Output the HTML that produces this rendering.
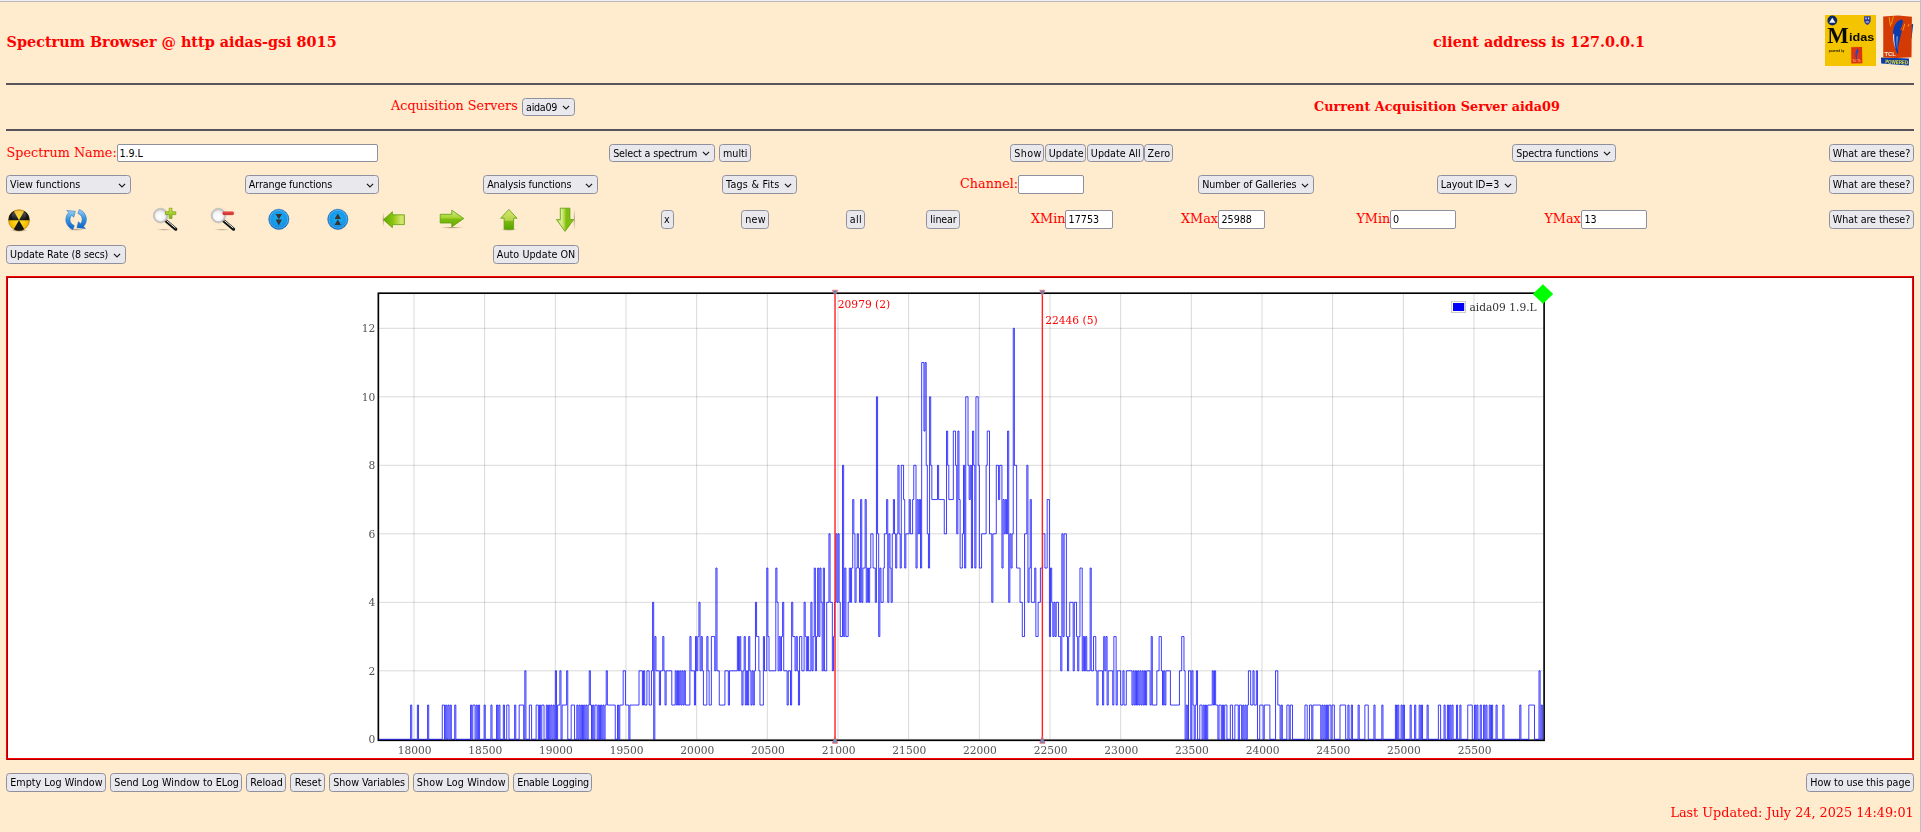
<!DOCTYPE html>
<html lang="en"><head><meta charset="utf-8"><title>Spectrum Browser</title>
<style>
html,body{margin:0;padding:0;}
body{width:1921px;height:832px;overflow:hidden;background:#ffebcd;color:#ff0000;font-family:"DejaVu Serif","Liberation Serif",serif;font-size:12.8px;position:relative;}
.a{position:absolute;white-space:nowrap;line-height:1;}
.t{font-size:12.8px;}
.b{font-weight:bold;}
.h{font-size:14.4px;font-weight:bold;}
.btn,.sel,.inp{position:absolute;box-sizing:border-box;font-family:"DejaVu Sans Condensed","DejaVu Sans","Liberation Sans",sans-serif;font-stretch:condensed;font-size:10.667px;color:#000;white-space:nowrap;overflow:hidden;}
.btn,.sel{background:#e9e9ed;border:1px solid #8f8f9d;border-radius:3.5px;}
.inp{background:#fff;border:1px solid #8f8f9d;border-radius:2px;}
.btn span,.sel span,.inp span{position:absolute;top:0;}
.hr{position:absolute;left:6px;width:1908px;height:2px;background:#55555a;}
.chev{position:absolute;right:3.7px;top:50%;margin-top:-2px;width:8px;height:5px;}
</style></head>
<body>
<div style="position:absolute;left:0;top:0;width:1921px;height:1px;background:#efefef"></div>
<div style="position:absolute;left:0;top:1px;width:1921px;height:1px;background:#b9b9b9"></div>
<div style="position:absolute;left:1920px;top:0;width:1px;height:832px;background:#c0c0c6"></div>
<div class="a h" style="left:6.6px;top:35px;">Spectrum Browser @ http aidas-gsi 8015</div>
<div class="a h" style="left:1433px;top:35px;">client address is 127.0.0.1</div>
<div class="hr" style="top:83px"></div>
<div class="a t" style="left:391px;top:100px;">Acquisition Servers</div>
<div class="a t b" style="left:1314px;top:101px;">Current Acquisition Server aida09</div>
<div class="hr" style="top:129px"></div>
<div class="a t" style="left:6.5px;top:147px;">Spectrum Name:</div>
<div class="a t" style="left:960px;top:178px;">Channel:</div>
<div class="a t" style="left:1031px;top:213px;">XMin</div>
<div class="a t" style="left:1181px;top:213px;">XMax</div>
<div class="a t" style="left:1356.4px;top:213px;">YMin</div>
<div class="a t" style="left:1544.4px;top:213px;">YMax</div>
<div style="position:absolute;left:6px;top:276px;width:1908px;height:484px;box-sizing:border-box;border:1px solid;border-color:#ff0000 #a80000 #a80000 #ff0000;background:#fff"></div>
<div style="position:absolute;left:7px;top:277px;width:1906px;height:482px;box-sizing:border-box;border:1px solid;border-color:#a80000 #ff0000 #ff0000 #a80000;background:#fff"></div>
<svg width="1921" height="832" viewBox="0 0 1921 832" style="position:absolute;left:0;top:0;overflow:visible;will-change:transform">
<path d="M414.01 294.05V739.30M484.67 294.05V739.30M555.34 294.05V739.30M626.00 294.05V739.30M696.67 294.05V739.30M767.33 294.05V739.30M838.00 294.05V739.30M908.66 294.05V739.30M979.33 294.05V739.30M1049.99 294.05V739.30M1120.66 294.05V739.30M1191.32 294.05V739.30M1261.99 294.05V739.30M1332.65 294.05V739.30M1403.32 294.05V739.30M1473.98 294.05V739.30M379.10 739.30H1542.95M379.10 670.80H1542.95M379.10 602.30H1542.95M379.10 533.80H1542.95M379.10 465.30H1542.95M379.10 396.80H1542.95M379.10 328.30H1542.95" fill="none" stroke="#000" stroke-opacity="0.15" stroke-width="1"/>
<g font-family="'DejaVu Serif','Liberation Serif',serif" font-size="10.67" fill="#545454">
<text x="414.6" y="754" text-anchor="middle">18000</text>
<text x="485.3" y="754" text-anchor="middle">18500</text>
<text x="555.9" y="754" text-anchor="middle">19000</text>
<text x="626.6" y="754" text-anchor="middle">19500</text>
<text x="697.3" y="754" text-anchor="middle">20000</text>
<text x="767.9" y="754" text-anchor="middle">20500</text>
<text x="838.6" y="754" text-anchor="middle">21000</text>
<text x="909.3" y="754" text-anchor="middle">21500</text>
<text x="979.9" y="754" text-anchor="middle">22000</text>
<text x="1050.6" y="754" text-anchor="middle">22500</text>
<text x="1121.3" y="754" text-anchor="middle">23000</text>
<text x="1191.9" y="754" text-anchor="middle">23500</text>
<text x="1262.6" y="754" text-anchor="middle">24000</text>
<text x="1333.3" y="754" text-anchor="middle">24500</text>
<text x="1403.9" y="754" text-anchor="middle">25000</text>
<text x="1474.6" y="754" text-anchor="middle">25500</text>
<text x="375.2" y="743.4" text-anchor="end">0</text>
<text x="375.2" y="674.9" text-anchor="end">2</text>
<text x="375.2" y="606.4" text-anchor="end">4</text>
<text x="375.2" y="537.9" text-anchor="end">6</text>
<text x="375.2" y="469.4" text-anchor="end">8</text>
<text x="375.2" y="400.9" text-anchor="end">10</text>
<text x="375.2" y="332.4" text-anchor="end">12</text>
</g>
<rect x="378.35" y="293.20" width="1165.75" height="447.10" fill="none" stroke="#000" stroke-width="1.65"/>
<path d="M379.10 739.30H380.09H410.62V705.05H411.75V739.30H417.40V705.05H418.53V739.30H427.58V705.05H428.71V739.30H442.27V705.05H444.54V739.30H445.67V705.05H446.80V739.30H447.93V705.05H449.06V739.30H450.19V705.05H451.32V739.30H454.71V705.05H455.84V739.30H470.54V705.05H471.67V739.30H472.80V705.05H475.06V739.30H476.19V705.05H477.32V739.30H478.45V705.05H479.59V739.30H484.11V705.05H485.24V739.30H490.89V705.05H492.02V739.30H496.55V705.05H497.68V739.30H498.81V705.05H499.94V739.30H503.33V705.05H504.46V739.30H506.72V705.05H508.98V739.30H514.64V705.05H515.77V739.30H519.16V705.05H523.68V739.30H524.81V670.80H525.94V739.30H529.33V705.05H531.60V739.30H536.12V705.05H538.38V739.30H539.51V705.05H540.64V739.30H541.77V705.05H544.03V739.30H546.29V705.05H547.42V739.30H548.55V705.05H549.69V739.30H550.82V705.05H551.95V739.30H553.08V705.05H554.21V739.30H555.34V670.80H556.47V739.30H557.60V705.05H559.86V670.80H560.99V739.30H562.12V705.05H566.64V670.80H567.78V739.30H571.17V705.05H574.56V739.30H576.82V705.05H577.95V739.30H579.08V705.05H580.21V739.30H581.34V705.05H582.47V739.30H583.60V705.05H584.74V739.30H585.87V705.05H587.00V739.30H588.13V705.05H589.26V670.80H590.39V705.05H591.52V739.30H592.65V705.05H593.78V739.30H594.91V705.05H597.17V739.30H598.30V705.05H599.43V739.30H600.56V705.05H601.69V739.30H602.83V705.05H603.96V739.30H605.09V705.05H606.22V670.80H607.35V705.05H615.26V739.30H617.52V705.05H618.65V739.30H619.78V705.05H623.18V670.80H625.44V705.05H628.83V739.30H629.96V705.05H639.01V670.80H642.40V705.05H643.53V670.80H644.66V705.05H646.92V670.80H649.18V705.05H651.44V670.80H652.57V602.30H653.70V739.30H654.83V636.55H655.97V670.80H659.36V705.05H660.49V670.80H662.75V636.55H663.88V670.80H665.01V705.05H666.14V670.80H671.79V705.05H675.19V670.80H676.32V705.05H677.45V670.80H678.58V705.05H679.71V670.80H680.84V705.05H681.97V670.80H683.10V705.05H684.23V670.80H685.36V705.05H689.88V636.55H691.02V670.80H694.41V705.05H695.54V636.55H696.67V670.80H697.80V636.55H698.93V602.30H700.06V670.80H701.19V636.55H702.32V670.80H703.45V705.05H706.84V636.55H707.97V670.80H709.11V705.05H711.37V636.55H714.76V670.80H715.89V568.05H717.02V670.80H719.28V705.05H724.93V670.80H728.33V705.05H729.46V670.80H737.37V636.55H738.50V670.80H739.63V636.55H740.76V670.80H741.89V705.05H743.02V670.80H744.16V636.55H745.29V705.05H746.42V670.80H747.55V705.05H748.68V636.55H749.81V670.80H750.94V705.05H752.07V670.80H753.20V705.05H754.33V670.80H755.46V602.30H756.59V636.55H758.85V670.80H759.98V705.05H763.38V636.55H764.51V670.80H766.77V568.05H767.90V636.55H769.03V670.80H775.81V568.05H776.94V602.30H778.07V670.80H779.21V636.55H780.34V670.80H781.47V636.55H782.60V602.30H783.73V670.80H787.12V705.05H788.25V670.80H790.51V705.05H791.64V602.30H792.77V636.55H795.03V670.80H796.16V636.55H797.30V670.80H798.43V705.05H799.56V636.55H801.82V670.80H804.08V602.30H805.21V636.55H806.34V670.80H807.47V636.55H808.60V670.80H810.86V602.30H811.99V670.80H813.12V636.55H814.26V568.05H815.39V670.80H816.52V636.55H817.65V568.05H818.78V636.55H819.91V568.05H821.04V602.30H822.17V670.80H823.30V568.05H824.43V670.80H826.69V602.30H828.95V533.80H830.08V602.30H832.35V670.80H833.48V636.55H834.61V602.30H835.74V533.80H836.87V602.30H838.00V533.80H839.13V602.30H840.26V636.55H842.52V465.30H843.65V636.55H844.78V568.05H845.91V636.55H848.17V602.30H849.30V568.05H850.44V602.30H851.57V568.05H852.70V499.55H853.83V533.80H854.96V602.30H856.09V568.05H857.22V533.80H858.35V568.05H859.48V602.30H860.61V499.55H861.74V602.30H862.87V568.05H865.13V499.55H866.26V602.30H867.40V568.05H868.53V602.30H869.66V568.05H870.79V533.80H873.05V568.05H875.31V602.30H876.44V396.80H877.57V533.80H878.70V636.55H879.83V568.05H880.96V602.30H883.22V568.05H884.35V533.80H886.62V499.55H887.75V602.30H888.88V533.80H890.01V568.05H891.14V602.30H892.27V533.80H893.40V499.55H894.53V533.80H895.66V568.05H896.79V533.80H897.92V465.30H899.05V533.80H900.18V568.05H901.31V465.30H903.58V499.55H904.71V568.05H905.84V533.80H909.23V499.55H910.36V533.80H912.62V499.55H913.75V465.30H916.01V568.05H917.14V499.55H918.27V533.80H919.40V499.55H920.54V568.05H921.67V362.55H923.93V431.05H925.06V362.55H926.19V465.30H927.32V533.80H928.45V568.05H929.58V396.80H930.71V465.30H931.84V499.55H937.49V465.30H938.63V499.55H944.28V533.80H946.54V431.05H947.67V465.30H948.80V499.55H953.32V431.05H955.59V465.30H956.72V533.80H957.85V431.05H958.98V499.55H960.11V568.05H962.37V533.80H963.50V465.30H964.63V568.05H965.76V396.80H968.02V465.30H969.15V499.55H970.28V465.30H971.41V568.05H972.54V431.05H973.68V465.30H974.81V568.05H975.94V396.80H978.20V465.30H979.33V568.05H981.59V533.80H986.11V465.30H987.24V431.05H989.50V533.80H991.77V602.30H992.90V533.80H996.29V465.30H998.55V499.55H999.68V465.30H1001.94V568.05H1003.07V499.55H1004.20V533.80H1005.33V499.55H1006.46V533.80H1007.59V431.05H1008.73V602.30H1009.86V533.80H1010.99V568.05H1012.12V533.80H1013.25V328.30H1014.38V465.30H1016.64V568.05H1020.03V602.30H1022.29V636.55H1024.55V533.80H1026.82V465.30H1027.95V602.30H1029.08V568.05H1030.21V499.55H1031.34V602.30H1034.73V568.05H1035.86V636.55H1038.12V602.30H1040.38V568.05H1042.64V533.80H1044.91V568.05H1047.17V499.55H1049.43V636.55H1050.56V568.05H1051.69V602.30H1052.82V636.55H1053.95V602.30H1055.08V636.55H1056.21V602.30H1058.47V636.55H1060.73V670.80H1061.87V533.80H1063.00V636.55H1064.13V533.80H1066.39V636.55H1067.52V670.80H1068.65V636.55H1069.78V602.30H1073.17V670.80H1074.30V602.30H1076.56V636.55H1077.69V670.80H1078.82V636.55H1079.96V568.05H1082.22V670.80H1083.35V636.55H1084.48V670.80H1085.61V636.55H1086.74V670.80H1090.13V568.05H1091.26V670.80H1093.52V636.55H1095.78V670.80H1096.92V705.05H1098.05V670.80H1102.57V705.05H1103.70V636.55H1104.83V670.80H1105.96V636.55H1107.09V705.05H1108.22V670.80H1112.74V705.05H1113.87V636.55H1116.14V705.05H1117.27V670.80H1120.66V705.05H1122.92V670.80H1124.05V705.05H1126.31V670.80H1131.96V705.05H1133.10V670.80H1134.23V705.05H1135.36V670.80H1136.49V705.05H1137.62V670.80H1138.75V705.05H1139.88V670.80H1141.01V705.05H1142.14V670.80H1143.27V705.05H1144.40V670.80H1145.53V705.05H1146.66V670.80H1150.06V705.05H1151.19V636.55H1152.32V705.05H1156.84V670.80H1159.10V636.55H1161.36V670.80H1162.49V705.05H1163.62V670.80H1164.75V705.05H1165.88V670.80H1170.41V705.05H1179.45V670.80H1181.71V636.55H1183.97V670.80H1185.10V739.30H1186.24V705.05H1187.37V739.30H1188.50V670.80H1190.76V739.30H1191.89V670.80H1193.02V705.05H1194.15V739.30H1195.28V705.05H1196.41V670.80H1197.54V739.30H1199.80V705.05H1202.06V739.30H1203.20V705.05H1204.33V739.30H1205.46V705.05H1206.59V739.30H1207.72V705.05H1212.24V670.80H1213.37V705.05H1214.50V670.80H1215.63V705.05H1217.89V739.30H1219.02V705.05H1221.29V739.30H1222.42V705.05H1223.55V739.30H1224.68V705.05H1226.94V739.30H1230.33V705.05H1232.59V739.30H1234.85V705.05H1238.25V739.30H1239.38V705.05H1241.64V739.30H1242.77V705.05H1243.90V739.30H1245.03V705.05H1246.16V739.30H1247.29V705.05H1248.42V670.80H1250.68V705.05H1252.94V670.80H1254.07V705.05H1256.34V670.80H1257.47V739.30H1259.73V705.05H1263.12V739.30H1264.25V705.05H1269.90V739.30H1275.56V670.80H1277.82V705.05H1280.08V739.30H1281.21V705.05H1282.34V739.30H1286.86V705.05H1289.12V739.30H1290.25V705.05H1292.52V739.30H1304.95V705.05H1307.21V739.30H1309.48V705.05H1311.74V739.30H1312.87V705.05H1320.78V739.30H1321.91V705.05H1323.04V739.30H1324.17V705.05H1325.30V739.30H1326.43V705.05H1327.57V739.30H1328.70V705.05H1330.96V739.30H1332.09V705.05H1334.35V739.30H1340.00V705.05H1345.66V739.30H1347.92V705.05H1349.05V739.30H1351.31V705.05H1352.44V739.30H1358.09V705.05H1359.22V739.30H1364.88V705.05H1368.27V739.30H1373.92V705.05H1375.05V739.30H1381.84V705.05H1382.97V739.30H1395.40V705.05H1396.53V739.30H1397.67V705.05H1398.80V739.30H1401.06V705.05H1402.19V739.30H1403.32V705.05H1404.45V739.30H1410.10V705.05H1411.23V739.30H1414.62V705.05H1415.76V739.30H1419.15V705.05H1420.28V739.30H1421.41V705.05H1422.54V739.30H1427.06V705.05H1428.19V739.30H1438.37V705.05H1440.63V739.30H1444.02V705.05H1445.15V739.30H1447.41V705.05H1448.54V739.30H1449.67V705.05H1450.81V739.30H1451.94V705.05H1453.07V739.30H1456.46V705.05H1457.59V739.30H1459.85V705.05H1460.98V739.30H1467.76V705.05H1472.29V739.30H1474.55V705.05H1475.68V739.30H1476.81V705.05H1477.94V739.30H1480.20V705.05H1481.33V739.30H1483.59V705.05H1484.72V739.30H1485.86V705.05H1486.99V739.30H1489.25V705.05H1490.38V739.30H1491.51V705.05H1492.64V739.30H1496.03V705.05H1497.16V739.30H1502.81V705.05H1503.95V739.30H1519.77V705.05H1520.91V739.30H1528.82V705.05H1534.47V739.30H1539.00V670.80H1540.13V739.30H1541.26V705.05H1542.39V739.30H1542.95" fill="none" stroke="#0000ff" stroke-opacity="0.9" stroke-width="0.85" stroke-linejoin="round"/>
<path d="M835.03 292V740.10" stroke="#ff2020" stroke-width="1.4" fill="none"/>
<path d="M832.43 290.2H837.63L835.03 296Z" fill="#5b86b5" stroke="#f66" stroke-width="0.7"/>
<path d="M832.43 743.2H837.63L835.03 736.6Z" fill="#5b9bd5" stroke="#f44" stroke-width="0.7"/>
<text x="837.8" y="308" font-family="'DejaVu Serif','Liberation Serif',serif" font-size="10.67" fill="#ff0000">20979 (2)</text>
<path d="M1042.36 292V740.10" stroke="#ff2020" stroke-width="1.4" fill="none"/>
<path d="M1039.76 290.2H1044.96L1042.36 296Z" fill="#5b86b5" stroke="#f66" stroke-width="0.7"/>
<path d="M1039.76 743.2H1044.96L1042.36 736.6Z" fill="#5b9bd5" stroke="#f44" stroke-width="0.7"/>
<text x="1045.2" y="324" font-family="'DejaVu Serif','Liberation Serif',serif" font-size="10.67" fill="#ff0000">22446 (5)</text>
<rect x="1451.5" y="301.5" width="14" height="11" fill="#fffff4" stroke="#ccc" stroke-width="1"/>
<rect x="1453" y="303" width="11.2" height="8" fill="#0000ff"/>
<text x="1469.4" y="311" font-family="'DejaVu Serif','Liberation Serif',serif" font-size="10.67" fill="#333">aida09 1.9.L</text>
<path d="M1543 284.2L1553.2 294L1543 303.8L1532.8 294Z" fill="#00ff00"/>
</svg>
<div class="a t" style="left:1670.4px;top:807px;">Last Updated: July 24, 2025 14:49:01</div>
<div class="sel" style="left:522px;top:98px;width:53px;height:18px;"><span style="left:3.05px;letter-spacing:-0.279px;line-height:17px">aida09</span><svg class="chev" viewBox="0 0 8 5"><path d="M0.9 0.8 L4 3.9 L7.1 0.8" fill="none" stroke="#1a1a1a" stroke-width="1.15"/></svg></div>
<div class="inp" style="left:117px;top:144px;width:261px;height:18px;"><span style="left:1.45px;letter-spacing:-0.081px;line-height:17px">1.9.L</span></div>
<div class="sel" style="left:609px;top:144px;width:106px;height:18px;"><span style="left:3.15px;letter-spacing:-0.169px;line-height:17px">Select a spectrum</span><svg class="chev" viewBox="0 0 8 5"><path d="M0.9 0.8 L4 3.9 L7.1 0.8" fill="none" stroke="#1a1a1a" stroke-width="1.15"/></svg></div>
<div class="btn" style="left:719px;top:144px;width:32px;height:18px;"><span style="left:2.95px;letter-spacing:0.024px;line-height:17px">multi</span></div>
<div class="btn" style="left:1010px;top:144px;width:34px;height:18px;"><span style="left:3.25px;letter-spacing:0.410px;line-height:17px">Show</span></div>
<div class="btn" style="left:1045px;top:144px;width:41px;height:18px;"><span style="left:2.75px;letter-spacing:0.035px;line-height:17px">Update</span></div>
<div class="btn" style="left:1087px;top:144px;width:57px;height:18px;"><span style="left:2.85px;letter-spacing:0.016px;line-height:17px">Update All</span></div>
<div class="btn" style="left:1144px;top:144px;width:29px;height:18px;"><span style="left:2.45px;letter-spacing:0.255px;line-height:17px">Zero</span></div>
<div class="sel" style="left:1512px;top:144px;width:104px;height:18px;"><span style="left:3.25px;letter-spacing:-0.113px;line-height:17px">Spectra functions</span><svg class="chev" viewBox="0 0 8 5"><path d="M0.9 0.8 L4 3.9 L7.1 0.8" fill="none" stroke="#1a1a1a" stroke-width="1.15"/></svg></div>
<div class="btn" style="left:1829px;top:144px;width:85px;height:18px;"><span style="left:2.75px;letter-spacing:-0.070px;line-height:17px">What are these?</span></div>
<div class="sel" style="left:6px;top:175px;width:125px;height:19px;"><span style="left:3.05px;letter-spacing:0.021px;line-height:18px">View functions</span><svg class="chev" viewBox="0 0 8 5"><path d="M0.9 0.8 L4 3.9 L7.1 0.8" fill="none" stroke="#1a1a1a" stroke-width="1.15"/></svg></div>
<div class="sel" style="left:245px;top:175px;width:134px;height:19px;"><span style="left:2.85px;letter-spacing:-0.124px;line-height:18px">Arrange functions</span><svg class="chev" viewBox="0 0 8 5"><path d="M0.9 0.8 L4 3.9 L7.1 0.8" fill="none" stroke="#1a1a1a" stroke-width="1.15"/></svg></div>
<div class="sel" style="left:483px;top:175px;width:115px;height:19px;"><span style="left:3.15px;letter-spacing:-0.141px;line-height:18px">Analysis functions</span><svg class="chev" viewBox="0 0 8 5"><path d="M0.9 0.8 L4 3.9 L7.1 0.8" fill="none" stroke="#1a1a1a" stroke-width="1.15"/></svg></div>
<div class="sel" style="left:722px;top:175px;width:75px;height:19px;"><span style="left:3.05px;letter-spacing:0.253px;line-height:18px">Tags &amp; Fits</span><svg class="chev" viewBox="0 0 8 5"><path d="M0.9 0.8 L4 3.9 L7.1 0.8" fill="none" stroke="#1a1a1a" stroke-width="1.15"/></svg></div>
<div class="inp" style="left:1018px;top:175px;width:66px;height:19px;"></div>
<div class="sel" style="left:1198px;top:175px;width:116px;height:19px;"><span style="left:3.25px;letter-spacing:-0.093px;line-height:18px">Number of Galleries</span><svg class="chev" viewBox="0 0 8 5"><path d="M0.9 0.8 L4 3.9 L7.1 0.8" fill="none" stroke="#1a1a1a" stroke-width="1.15"/></svg></div>
<div class="sel" style="left:1437px;top:175px;width:80px;height:19px;"><span style="left:2.85px;letter-spacing:-0.147px;line-height:18px">Layout ID=3</span><svg class="chev" viewBox="0 0 8 5"><path d="M0.9 0.8 L4 3.9 L7.1 0.8" fill="none" stroke="#1a1a1a" stroke-width="1.15"/></svg></div>
<div class="btn" style="left:1829px;top:175px;width:85px;height:19px;"><span style="left:2.75px;letter-spacing:-0.070px;line-height:18px">What are these?</span></div>
<div class="btn" style="left:661px;top:210px;width:13px;height:19px;"><span style="left:2.05px;letter-spacing:0.000px;line-height:18px">x</span></div>
<div class="btn" style="left:741px;top:210px;width:28px;height:19px;"><span style="left:3.25px;letter-spacing:0.240px;line-height:18px">new</span></div>
<div class="btn" style="left:846px;top:210px;width:19px;height:19px;"><span style="left:2.65px;letter-spacing:0.449px;line-height:18px">all</span></div>
<div class="btn" style="left:926px;top:210px;width:34px;height:19px;"><span style="left:3.35px;letter-spacing:-0.144px;line-height:18px">linear</span></div>
<div class="inp" style="left:1065px;top:210px;width:48px;height:19px;"><span style="left:2.55px;letter-spacing:0.027px;line-height:18px">17753</span></div>
<div class="inp" style="left:1218px;top:210px;width:47px;height:19px;"><span style="left:2.55px;letter-spacing:-0.023px;line-height:18px">25988</span></div>
<div class="inp" style="left:1390px;top:210px;width:66px;height:19px;"><span style="left:2.05px;letter-spacing:0.000px;line-height:18px">0</span></div>
<div class="inp" style="left:1581px;top:210px;width:66px;height:19px;"><span style="left:2.45px;letter-spacing:0.004px;line-height:18px">13</span></div>
<div class="btn" style="left:1829px;top:210px;width:85px;height:19px;"><span style="left:2.75px;letter-spacing:-0.070px;line-height:18px">What are these?</span></div>
<div class="sel" style="left:6px;top:245px;width:120px;height:19px;"><span style="left:3.05px;letter-spacing:-0.119px;line-height:18px">Update Rate (8 secs)</span><svg class="chev" viewBox="0 0 8 5"><path d="M0.9 0.8 L4 3.9 L7.1 0.8" fill="none" stroke="#1a1a1a" stroke-width="1.15"/></svg></div>
<div class="btn" style="left:493px;top:245px;width:86px;height:19px;"><span style="left:2.85px;letter-spacing:0.047px;line-height:18px">Auto Update ON</span></div>
<div class="btn" style="left:6px;top:773px;width:100px;height:19px;"><span style="left:3.25px;letter-spacing:0.028px;line-height:18px">Empty Log Window</span></div>
<div class="btn" style="left:110px;top:773px;width:132px;height:19px;"><span style="left:3.35px;letter-spacing:0.028px;line-height:18px">Send Log Window to ELog</span></div>
<div class="btn" style="left:246px;top:773px;width:40px;height:19px;"><span style="left:3.35px;letter-spacing:-0.014px;line-height:18px">Reload</span></div>
<div class="btn" style="left:290px;top:773px;width:35px;height:19px;"><span style="left:3.75px;letter-spacing:-0.009px;line-height:18px">Reset</span></div>
<div class="btn" style="left:329px;top:773px;width:80px;height:19px;"><span style="left:3.35px;letter-spacing:-0.072px;line-height:18px">Show Variables</span></div>
<div class="btn" style="left:413px;top:773px;width:96px;height:19px;"><span style="left:2.85px;letter-spacing:0.140px;line-height:18px">Show Log Window</span></div>
<div class="btn" style="left:513px;top:773px;width:79px;height:19px;"><span style="left:3.25px;letter-spacing:-0.140px;line-height:18px">Enable Logging</span></div>
<div class="btn" style="left:1806px;top:773px;width:108px;height:19px;"><span style="left:3.25px;letter-spacing:-0.054px;line-height:18px">How to use this page</span></div>
<svg width="1921" height="300" viewBox="0 0 1921 300" style="position:absolute;left:0;top:0;overflow:visible;will-change:transform">
<defs>
<radialGradient id="gsh" cx="50%" cy="50%" r="50%"><stop offset="0" stop-color="#3c2a10" stop-opacity="0.55"/><stop offset="1" stop-color="#3c2a10" stop-opacity="0"/></radialGradient>
<radialGradient id="gball" cx="50%" cy="55%" r="55%"><stop offset="0" stop-color="#ffe030"/><stop offset="0.7" stop-color="#f5c000"/><stop offset="1" stop-color="#d89a00"/></radialGradient>
<linearGradient id="gballhi" x1="0" y1="0" x2="0" y2="1"><stop offset="0" stop-color="#fff" stop-opacity="0.55"/><stop offset="1" stop-color="#fff" stop-opacity="0"/></linearGradient>
<linearGradient id="gblue" x1="0" y1="0" x2="0" y2="1"><stop offset="0" stop-color="#9ed0f5"/><stop offset="0.45" stop-color="#3b97e0"/><stop offset="1" stop-color="#0b62c4"/></linearGradient>
<radialGradient id="gcirc" cx="50%" cy="45%" r="55%"><stop offset="0" stop-color="#18b0f4"/><stop offset="0.75" stop-color="#1594e6"/><stop offset="1" stop-color="#0a63b8"/></radialGradient>
<radialGradient id="glens" cx="45%" cy="60%" r="60%"><stop offset="0" stop-color="#ffffff"/><stop offset="0.6" stop-color="#f4f4f4"/><stop offset="1" stop-color="#d4d4d4"/></radialGradient>
<linearGradient id="gplus" x1="0" y1="0" x2="0" y2="1"><stop offset="0" stop-color="#d8ea40"/><stop offset="1" stop-color="#7cb518"/></linearGradient>
<linearGradient id="gminus" x1="0" y1="0" x2="0" y2="1"><stop offset="0" stop-color="#f06060"/><stop offset="1" stop-color="#c81818"/></linearGradient>
<linearGradient id="gleft" x1="0" y1="0" x2="1" y2="0"><stop offset="0" stop-color="#5aa800"/><stop offset="0.45" stop-color="#8cc410"/><stop offset="0.85" stop-color="#d6e66a"/><stop offset="1" stop-color="#c8e060"/></linearGradient>
<linearGradient id="gright" x1="0" y1="0" x2="0" y2="1"><stop offset="0" stop-color="#d4ec90"/><stop offset="0.45" stop-color="#a8d430"/><stop offset="0.55" stop-color="#7cbc10"/><stop offset="1" stop-color="#6aae08"/></linearGradient>
<linearGradient id="gup" x1="0" y1="0" x2="0" y2="1"><stop offset="0" stop-color="#d8e870"/><stop offset="0.55" stop-color="#b4d448"/><stop offset="0.58" stop-color="#7cb810"/><stop offset="1" stop-color="#58a400"/></linearGradient>
<linearGradient id="gdown" x1="0" y1="0" x2="1" y2="0"><stop offset="0" stop-color="#b8dc50"/><stop offset="0.3" stop-color="#dcec98"/><stop offset="0.5" stop-color="#a4d028"/><stop offset="0.55" stop-color="#7cbc10"/><stop offset="1" stop-color="#8cc418"/></linearGradient>
</defs>
<ellipse cx="19.0" cy="230.3" rx="9" ry="1.6" fill="url(#gsh)"/>
<circle cx="19.0" cy="220.2" r="10.5" fill="url(#gball)" stroke="#a87808" stroke-width="0.6"/>
<path d="M19.0 220.2L29.50 220.20A10.5 10.5 0 0 0 24.25 211.11ZM19.0 220.2L13.75 211.11A10.5 10.5 0 0 0 8.50 220.20ZM19.0 220.2L13.75 229.29A10.5 10.5 0 0 0 24.25 229.29Z" fill="#161616"/>
<ellipse cx="19.0" cy="215.6" rx="7.4" ry="4.8" fill="url(#gballhi)" opacity="0.55"/>
<ellipse cx="76" cy="229.6" rx="9" ry="1.3" fill="url(#gsh)" opacity="0.7"/>
<path d="M72.99 229.49A10.4 10.4 0 0 1 68.72 212.38L66.70 210.43L75.33 211.35L73.75 217.24L71.74 215.29A6.2 6.2 0 0 0 74.28 225.50Z" fill="url(#gblue)" stroke="#1566c0" stroke-width="0.5" stroke-linejoin="round"/>
<path d="M79.21 209.51A10.4 10.4 0 0 1 83.48 226.62L85.50 228.57L76.87 227.65L78.45 221.76L80.46 223.71A6.2 6.2 0 0 0 77.92 213.50Z" fill="url(#gblue)" stroke="#1566c0" stroke-width="0.5" stroke-linejoin="round"/>
<ellipse cx="164.1" cy="229.6" rx="8" ry="1.2" fill="url(#gsh)" opacity="0.6"/><path d="M165.79999999999998 220.79999999999998L175.79999999999998 229.2" stroke="#111" stroke-width="3.1" stroke-linecap="round"/><path d="M166.79999999999998 220.79999999999998L175.2 227.79999999999998" stroke="#f2f2f2" stroke-width="1" stroke-linecap="round"/><circle cx="160.6" cy="215.6" r="6.5" fill="url(#glens)" stroke="#c6c6c6" stroke-width="1.7"/><circle cx="160.6" cy="215.6" r="7.4" fill="none" stroke="#a8a8a8" stroke-width="0.4"/>
<path d="M169.2 208.2H172V211.8H175.8V214.6H172V218.4H169.2V214.6H165.4V211.8H169.2Z" fill="url(#gplus)" stroke="#6e9c14" stroke-width="0.7" stroke-linejoin="round"/>
<ellipse cx="221.9" cy="229.6" rx="8" ry="1.2" fill="url(#gsh)" opacity="0.6"/><path d="M223.6 220.79999999999998L233.6 229.2" stroke="#111" stroke-width="3.1" stroke-linecap="round"/><path d="M224.6 220.79999999999998L233.0 227.79999999999998" stroke="#f2f2f2" stroke-width="1" stroke-linecap="round"/><circle cx="218.4" cy="215.6" r="6.5" fill="url(#glens)" stroke="#c6c6c6" stroke-width="1.7"/><circle cx="218.4" cy="215.6" r="7.4" fill="none" stroke="#a8a8a8" stroke-width="0.4"/>
<rect x="222.8" y="211.8" width="10.8" height="2.9" rx="0.9" fill="url(#gminus)" stroke="#c22" stroke-width="0.5"/>
<circle cx="278.8" cy="219.3" r="10.1" fill="url(#gcirc)" stroke="#0a5cae" stroke-width="0.5"/><circle cx="278.8" cy="219.3" r="8.9" fill="none" stroke="#8fd4fa" stroke-width="0.6" opacity="0.8"/><path d="M275.6 213.9H282.0L278.8 219.5Z M275.6 219.5H282.0L278.8 225.5Z" fill="#3a3532"/>
<circle cx="337.8" cy="219.3" r="10.1" fill="url(#gcirc)" stroke="#0a5cae" stroke-width="0.5"/><circle cx="337.8" cy="219.3" r="8.9" fill="none" stroke="#8fd4fa" stroke-width="0.6" opacity="0.8"/><path d="M337.8 213.5L341.0 219.10000000000002H334.6Z M337.8 219.3L341.0 225.10000000000002H334.6Z" fill="#3a3532"/>
<ellipse cx="383.4" cy="219.8" rx="1.2" ry="7.5" fill="url(#gsh)" opacity="0.7"/>
<path d="M383.4 219.7L392.4 211.7V214.8H404.4V224.6H392.4V227.7Z" fill="url(#gleft)" stroke="#5a9e0a" stroke-width="0.8" stroke-linejoin="round"/>
<ellipse cx="452" cy="227.6" rx="11.5" ry="1.1" fill="url(#gsh)" opacity="0.8"/>
<path d="M463.8 218.5L451.8 210.2V214.3H440.2V223H451.8V226.9Z" fill="url(#gright)" stroke="#5a9e0a" stroke-width="0.8" stroke-linejoin="round"/>
<ellipse cx="508.8" cy="229.7" rx="8.5" ry="1.2" fill="url(#gsh)" opacity="0.8"/>
<path d="M508.8 209.4L517 218.2H513.6V229.3H504.1V218.2H500.7Z" fill="url(#gup)" stroke="#5a9e0a" stroke-width="0.8" stroke-linejoin="round"/>
<ellipse cx="574.3" cy="219.5" rx="1.1" ry="11" fill="url(#gsh)" opacity="0.7"/>
<path d="M565 231.4L556.5 219.6H560.3V208.2H569.9V219.6H573.7Z" fill="url(#gdown)" stroke="#5a9e0a" stroke-width="0.8" stroke-linejoin="round"/>
</svg>
<svg width="1921" height="80" viewBox="0 0 1921 80" style="position:absolute;left:0;top:0;overflow:visible;will-change:transform">
<rect x="1825" y="15" width="51" height="51" fill="#f5c400"/>
<circle cx="1832.3" cy="20.5" r="4.9" fill="#0c2a66"/>
<path d="M1829.2 22.8L1832.3 17.8L1835.4 22.8Z" fill="#f4f4f4"/>
<path d="M1864.1 16.2H1870.6V20.6C1870.6 22.8 1869 24.2 1867.35 24.9C1865.7 24.2 1864.1 22.8 1864.1 20.6Z" fill="#2a3ca0"/>
<path d="M1865.4 17.6H1866.6V19.2H1865.4ZM1868 17.6H1869.2V19.2H1868ZM1865.8 21.4H1868.9V22.4H1865.8Z" fill="#dfe4f4"/>
<text x="1827.2" y="43.4" font-family="'Liberation Serif','DejaVu Serif',serif" font-weight="bold" font-size="23.8" fill="#0a0a00" textLength="21.6" lengthAdjust="spacingAndGlyphs">M</text>
<text x="1849" y="41" font-family="'Liberation Sans','DejaVu Sans',sans-serif" font-weight="bold" font-size="11.6" fill="#0a0a00" textLength="25.4" lengthAdjust="spacingAndGlyphs">idas</text>
<text x="1828.8" y="52.1" font-family="'Liberation Sans','DejaVu Sans',sans-serif" font-weight="bold" font-size="3.6" fill="#1a1400" textLength="15.4" lengthAdjust="spacingAndGlyphs">powered by</text>
<rect x="1850.6" y="46.4" width="12" height="17.6" fill="#f0b400"/>
<path d="M1851.2 47.2L1862 46.9L1862.3 63.2L1851.4 63.6Z" fill="#dc3410"/>
<path d="M1857.6 48.8C1855.4 50.4 1854.8 54.4 1856.2 59.4L1857 59.4C1856.6 56 1857.2 53.2 1858.4 51.2C1858.8 50.2 1858.4 49.2 1857.6 48.8Z" fill="#2848b8"/>
<text x="1852.2" y="62.4" font-family="'Liberation Sans',sans-serif" font-weight="bold" font-size="2.6" fill="#f6a060" textLength="8.6" lengthAdjust="spacingAndGlyphs">Tcl Tk</text>
<path d="M1881 57.6L1909 58.6L1908.8 65.6L1881.2 63.6Z" fill="#0a3aa8"/>
<path d="M1910.4 24.4L1913.2 24L1911.6 38.2L1910.2 38.2Z" fill="#0a3aa8"/>
<path d="M1883.2 16.4L1898 15.4L1911.9 16.8L1911.5 57.2L1897 57.9L1883.3 57.4Z" fill="#d43a04"/>
<path d="M1901.4 19.6C1895.8 20.6 1892.6 27.6 1892.9 36C1893.2 43 1895 48.8 1897.2 53.6L1898.3 53.2C1897.8 49 1898.2 45.4 1899.2 42C1900.2 37.6 1901.6 33.6 1901.8 29.6L1899.8 30.4C1901.2 27.4 1902.8 24.6 1903 21.6C1903 20.4 1902.4 19.8 1901.4 19.6Z" fill="#0a3cb0"/>
<path d="M1893.2 33.6C1892.6 38.6 1893.6 44.6 1895.8 49.4C1894.6 44.6 1894 39.6 1894.2 34.6Z" fill="#f0e8e0"/>
<path d="M1896.6 36C1896.2 40.6 1896.4 45.6 1897.4 50.2C1897.2 45.6 1897.4 40.8 1898 36.8Z" fill="#b8c0e0" opacity="0.7"/>
<path d="M1889.2 17.4C1889.6 20.4 1890 23.2 1890.6 26.2M1893.4 16.8C1892.4 19.4 1891.8 21.6 1891.6 24M1904.6 24.2C1904.2 26.4 1903.6 28.4 1902.8 30.2M1909 24.4L1908.2 26.2" stroke="#f8b818" stroke-width="0.8" fill="none" stroke-linecap="round"/>
<text x="1884.4" y="55.8" font-family="'Liberation Sans','DejaVu Sans',sans-serif" font-weight="bold" font-size="5.8" fill="#f6ece4" textLength="11.4" lengthAdjust="spacingAndGlyphs">TCL</text>
<text x="1885.2" y="63.6" transform="rotate(2.2 1885 63)" font-family="'Liberation Sans','DejaVu Sans',sans-serif" font-weight="bold" font-size="5.6" fill="#ece430" textLength="22.8" lengthAdjust="spacingAndGlyphs">POWERED</text>
</svg>
</body></html>
